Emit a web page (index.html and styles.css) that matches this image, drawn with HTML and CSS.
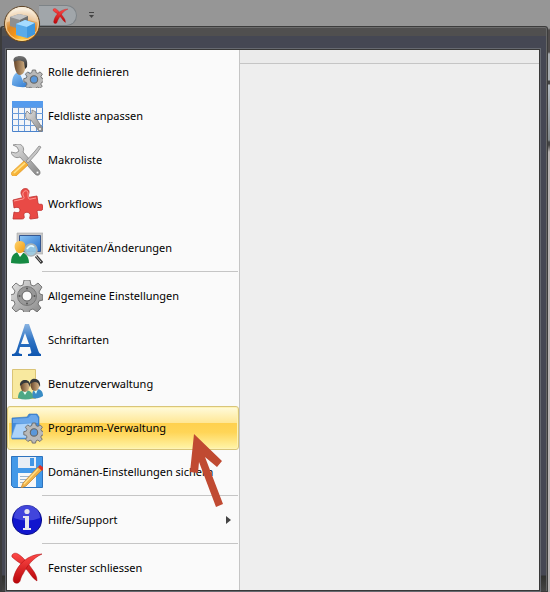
FILE: index.html
```html
<!DOCTYPE html>
<html lang="de">

<head>
  <meta charset="UTF-8" />
  <meta name="viewport" content="width=device-width, initial-scale=1.0" />
  <title>Programm-Menü</title>
  <link rel="stylesheet" href="styles.css">
</head>

<body>
  <!-- shared gradients and the small gear -->
  <svg class="defs" width="0" height="0" aria-hidden="true">
    <defs>
      <linearGradient id="blue" x1="0" y1="0" x2="1" y2="1">
        <stop offset="0" stop-color="#8cc4f4" /><stop offset="1" stop-color="#2470cc" />
      </linearGradient>
      <linearGradient id="letter" x1="0" y1="0" x2="0" y2="1">
        <stop offset="0" stop-color="#8ab4e2" /><stop offset=".5" stop-color="#2f74c4" /><stop offset="1" stop-color="#0f56b0" />
      </linearGradient>
      <linearGradient id="steel" x1="0" y1="0" x2="1" y2="1">
        <stop offset="0" stop-color="#e6e6e6" /><stop offset="1" stop-color="#858585" />
      </linearGradient>
      <linearGradient id="skin" x1="0" y1="0" x2="1" y2="0">
        <stop offset="0" stop-color="#684629" /><stop offset="1" stop-color="#dab98c" />
      </linearGradient>
      <linearGradient id="hair" x1="0" y1="0" x2="0" y2="1">
        <stop offset="0" stop-color="#777" /><stop offset="1" stop-color="#222" />
      </linearGradient>
      <linearGradient id="red" x1="0" y1="0" x2="0" y2="1">
        <stop offset="0" stop-color="#ff4a48" /><stop offset="1" stop-color="#b80509" />
      </linearGradient>
      <linearGradient id="gold" x1="0" y1="0" x2="1" y2="1">
        <stop offset="0" stop-color="#ffd36c" /><stop offset="1" stop-color="#f09a10" />
      </linearGradient>
      <g id="gear">
        <path d="M-1.6-9h3.2l.5 2.6 1.8.8 2.2-1.5 2.3 2.3-1.5 2.2.8 1.8 2.3.4v3.2l-2.4.5-.8 1.8 1.4 2.1-2.3 2.3-2.1-1.4-1.8.8-.5 2.2h-3.2l-.5-2.2-1.8-.8-2.1 1.4-2.3-2.3 1.4-2.1-.8-1.8-2.4-.5v-3.2l2.3-.4.8-1.8-1.5-2.2 2.3-2.3 2.2 1.5 1.8-.8z" fill="#b9b9b9" stroke="#6b6b6b" stroke-width=".9" />
        <circle r="3.7" cy=".4" fill="#5a97da" stroke="#686868" stroke-width="1.1" />
      </g>
      <g id="cross">
        <path d="M1 5C0 2 4 0 7 2c5 3 10 9 14 15 3 4 5 7 5 12-5-3-7-8-11-12C12 12 6 10 1 5z" fill="url(#red)" stroke="#a80508" stroke-width=".5" />
        <path d="M31 2C22 6 16 14 12 22c-3 4-2 8-5 9-4 1-6-2-4-7C6 13 17 2 31 2z" fill="url(#red)" stroke="#a80508" stroke-width=".5" />
      </g>
    </defs>
  </svg>

  <header class="titlebar">
    <button class="orb" aria-label="Menü">
      <svg viewBox="0 0 38 38">
        <defs>
          <radialGradient id="orb" cx=".5" cy=".95" r=".9">
            <stop offset="0" stop-color="#ffd24a" /><stop offset=".3" stop-color="#f39418" />
            <stop offset=".55" stop-color="#d9872a" /><stop offset="1" stop-color="#f8eedd" />
          </radialGradient>
        </defs>
        <circle cx="19" cy="19" r="17.6" fill="url(#orb)" stroke="#5e4325" />
        <circle cx="19" cy="19" r="16.3" fill="none" stroke="#f7dfb4" stroke-opacity=".8" />
        <path d="M4 17a15 15 0 0 1 30 0q-15-5-30 0z" fill="#fff" opacity=".35" />
        <path d="M7 12l9-3 9 2v9l-9 4-9-3z" fill="#8f8f8f" />
        <path d="M7 12l9-3 9 2-8 4z" fill="#c4c4c4" />
        <path d="M17 15l8-4v9l-8 4z" fill="#6e6e6e" />
        <path d="M13 19l9-4 10 3v11l-8 4-11-3z" fill="#5aabe9" />
        <path d="M13 19l9-4 10 3-8 4z" fill="#a5dbff" />
        <path d="M24 22l8-4v11l-8 4z" fill="#3f98e0" />
      </svg>
    </button>
    <button class="quick-close" aria-label="Schliessen">
      <svg viewBox="0 0 32 32"><use href="#cross" /></svg>
    </button>
    <button class="quick-more" aria-label="Mehr">
      <svg viewBox="0 0 7 8"><path d="M1 1.5h5" stroke="#444" /><path d="M1 4h5L3.5 7z" fill="#444" /></svg>
    </button>
  </header>

  <div class="window">
    <div class="panel">
      <nav class="menu">
        <button class="item">
          <svg viewBox="0 0 32 32">
            <path d="M1 29c0-8 2-12 7-13l5 3 4-3c5 1 6 7 6 13-6 3-16 3-22 0z" fill="url(#blue)" />
            <path d="M8 16l5 11 4-11z" fill="#e8f3ff" />
            <path d="M3 5c0-3 3-4 6-4 5 0 7 3 6 9-1 5-3 9-6 9-4 0-6-8-6-14z" fill="url(#skin)" />
            <path d="M3 6C1 2 5 0 9 0c6 0 8 4 7 11l-2 2-1-7C10 4 6 4 3 6z" fill="url(#hair)" />
            <use href="#gear" transform="translate(23 23)" />
          </svg>
          <span>Rolle definieren</span>
        </button>
        <button class="item">
          <svg viewBox="0 0 32 32">
            <path d="M1.5 1.5h30v30h-30z" fill="#f3f5f8" stroke="#4b83cc" />
            <path d="M1 1h31v6H1z" fill="#559bed" />
            <path d="M1 7.5h31M1 13.5h31M1 19.5h31M1 25.5h31M7.5 7v24M13.5 7v24M19.5 7v24M25.5 7v24" stroke="#6b9cda" />
            <path d="M16 11l3 3 2-1v-3l4 2v6l7 11c0 3-3 4-5 1l-7-10c-5 1-7-4-4-9z" fill="url(#steel)" stroke="#808080" stroke-width=".8" />
            <circle cx="29" cy="29" r="1" fill="#fff" />
          </svg>
          <span>Feldliste anpassen</span>
        </button>
        <button class="item">
          <svg viewBox="0 0 32 32">
            <path d="M2 1l5-1c4 0 7 4 5 8l16 18c3 4-1 7-4 4L9 13c-4 2-8-1-9-5l5 1 3-2-2-4z" fill="url(#steel)" stroke="#808080" stroke-width=".8" />
            <path d="M30 3L26 9l-9 10-2-2 9-10 4-5z" fill="#c6c6c6" stroke="#888" stroke-width=".8" />
            <path d="M13 17l4 4L5 32c-3 2-6-2-4-4z" fill="url(#gold)" stroke="#de8d11" stroke-width=".6" />
            <path d="M14 19L3 29" stroke="#ffe38a" stroke-width="1.5" />
            <circle cx="26.5" cy="28.5" r="1.2" fill="#fff" stroke="#888" stroke-width=".5" />
          </svg>
          <span>Makroliste</span>
        </button>
        <button class="item">
          <svg viewBox="0 0 32 32">
            <path d="M2 12l8-2c3 0 0-3 0-5 0-6 9-6 8 0-1 3-1 5 2 4l6-1 1 7c1 3 5-1 5 4 0 6-5 2-6 4l1 7-7 1c-3 0 0-3-1-5-2-3-7-2-6 2 1 3-1 3-4 3H2l1-7c3 1 6 1 6-2s-4-3-6-2z" fill="#e94a46" stroke="#bd302e" stroke-width=".8" />
            <path d="M3 13l9-2c3-1-1-3 0-6 1-3 5-3 5 0 0 4 0 7 3 6l5-1" fill="none" stroke="#ff9b95" />
          </svg>
          <span>Workflows</span>
        </button>
        <button class="item">
          <svg viewBox="0 0 32 32">
            <path d="M6 1h26v21H6z" fill="#c8c8c8" stroke="#aaa" stroke-width=".6" />
            <path d="M8.5 3.5h21v16h-21z" fill="url(#blue)" stroke="#36578f" />
            <path d="M0 31c0-8 3-10 8-11 6 0 10 4 10 11-6 1-12 1-18 0z" fill="#168a43" />
            <path d="M6 20l3 5 4-5z" fill="#fff" />
            <path d="M9 9c5 0 6 4 5 8-1 5-8 6-10 0-1-4 0-8 5-8z" fill="url(#gold)" />
            <path d="M25 24l6 7" stroke="#333" stroke-width="3" />
            <path d="M25 24l5 6" stroke="#ccc" />
            <circle cx="20" cy="18" r="6" fill="#9bcbe2" fill-opacity=".9" stroke="#a9b2b6" stroke-width="1.6" />
            <path d="M16 17q3-5 7-2" fill="none" stroke="#e2f8ff" stroke-width="1.5" />
          </svg>
          <span>Aktivitäten/Änderungen</span>
        </button>
        <hr>
        <button class="item">
          <svg viewBox="0 0 32 32">
            <path d="M13 0h6l1 5 3 1 4-3 4 4-3 5 1 2 3 1v5l-4 1-1 3 3 4-4 4-4-3-3 1-1 3h-5l-1-3-3-1-4 3-4-4 3-4-1-3-4-1v-5l4-1 1-3-3-4 4-4 4 3 3-1z" fill="url(#steel)" stroke="#606060" stroke-width=".8" />
            <circle cx="16" cy="16" r="9.5" fill="#989898" stroke="#777" />
            <circle cx="16" cy="16" r="5" fill="#fafafa" stroke="#606060" />
            <circle cx="16" cy="8.5" r="1" fill="#555" /><circle cx="16" cy="23.5" r="1" fill="#555" />
            <circle cx="8.5" cy="16" r="1" fill="#555" /><circle cx="23.5" cy="16" r="1" fill="#555" />
          </svg>
          <span>Allgemeine Einstellungen</span>
        </button>
        <button class="item">
          <svg viewBox="0 0 32 32">
            <path d="M14 0h4l9 26c1 3 2 4 3 4v2H17v-2c3 0 4-1 3-3l-1-4H9l-1 4c-1 2 0 3 3 3v2H1v-2c3 0 4-2 5-5zM14 9l-4 11h8z" fill="url(#letter)" fill-rule="evenodd" />
          </svg>
          <span>Schriftarten</span>
        </button>
        <button class="item">
          <svg viewBox="0 0 32 32">
            <path d="M1.5 1.5h23v29h-23z" fill="#f8e99f" stroke="#dac477" />
            <path d="M21 30c0-6 1-9 5-9s6 3 6 7c-3 2-7 3-11 2z" fill="#398cc5" />
            <path d="M7 30c0-6 3-8 7-8s8 2 8 8c-5 2-10 2-15 0z" fill="#4da886" />
            <path d="M11 22l3 5 3-5zM22 21l3 5 2-5z" fill="#e4fff4" />
            <ellipse cx="14" cy="18" rx="4.5" ry="6" fill="url(#skin)" />
            <ellipse cx="24" cy="17" rx="4.500" ry="6" fill="url(#skin)" />
            <path d="M9 18c-1-8 12-8 10 1l-2-4c-3-1-5 0-8 3zM19 16c-1-8 12-7 10 3l-2-4c-3-2-5-1-8 1z" fill="#35383a" />
          </svg>
          <span>Benutzerverwaltung</span>
        </button>
        <button class="item active">
          <svg viewBox="0 0 32 32">
            <path d="M1 6l15-1 2-3h8l2 3v20l-4 2H1z" fill="#438ad9" stroke="#3374be" stroke-width=".6" />
            <path d="M2 7l15-1 3-3h5l2 3v5H2z" fill="#6ba8ea" />
            <path d="M5 12l16-1-5 15H0z" fill="#acd3fa" stroke="#5c9de0" stroke-width=".6" />
            <use href="#gear" transform="translate(23 20)" />
          </svg>
          <span>Programm-Verwaltung</span>
        </button>
        <button class="item">
          <svg viewBox="0 0 32 32">
            <path d="M.5.5h31v31h-29l-2-2z" fill="#4499e8" stroke="#2e73bd" />
            <path d="M7 1h18v11H7z" fill="#e9eef5" /><path d="M19 2h4v8h-4z" fill="#4397e5" />
            <path d="M7 17h18v14H7z" fill="#f8f8f8" />
            <path d="M9 20.5h14M9 23.5h12M9 26.5h8" stroke="#9db5cd" />
            <path d="M27 11l4 3-16 16-5 2 2-5z" fill="#f1b348" stroke="#bc8030" stroke-width=".7" />
            <path d="M27 13L13 28" stroke="#ffe18f" stroke-width="1.3" />
            <path d="M27 11l2-2 4 3-2 3z" fill="#dc3024" />
          </svg>
          <span>Domänen-Einstellungen sichern</span>
        </button>
        <hr>
        <button class="item">
          <svg viewBox="0 0 32 32">
            <circle cx="16" cy="16" r="14.6" fill="#1116ce" stroke="#090e88" />
            <path d="M3 14a13 13 0 0 1 26 0q-13 5-26 0z" fill="#6a6ee8" opacity=".55" />
            <circle cx="16" cy="7.5" r="2.6" fill="#e6e6ee" />
            <path d="M12 12h6v12h2v2h-8v-2h2V14h-2z" fill="#e6e6ee" />
          </svg>
          <span>Hilfe/Support</span>
          <svg class="arrow" viewBox="0 0 5 8"><path d="M0 0l5 4-5 4z" fill="#444" /></svg>
        </button>
        <hr>
        <button class="item">
          <svg viewBox="0 0 32 32"><use href="#cross" /></svg>
          <span>Fenster schliessen</span>
        </button>
        <svg class="pointer" viewBox="0 0 36 74">
          <path d="M6 1l28 27-5 6-12-10 18 47-7 3L11 29l-1 11-8-1z" fill="#c04a32" />
        </svg>
      </nav>
      <section class="details">
        <div class="details-head"></div>
      </section>
    </div>
  </div>
</body>

</html>
```

FILE: styles.css
```css
* {
  box-sizing: border-box;
}

body {
  margin: 0;
  min-height: 100vh;
  display: flex;
  flex-direction: column;
  font-family: "Noto Sans", "Open Sans", sans-serif;
  font-size: 11px;
  background: linear-gradient(#969696 28px, #4f4b4b 30px, #4f4b4b 52px, #a9adb2 54px, #a9adb2 80px, #444 81px, #444 84px, #b4bbc2 85px, #858b8e 140px, #444 142px, #444 145px, #bbb5b5 152px);
}

button {
  font: inherit;
  color: #000;
  border: none;
  background: transparent;
  padding: 0;
}

svg {
  display: block;
}

.defs {
  position: absolute;
}

.titlebar {
  height: 26px;
  display: flex;
  align-items: flex-start;
  padding: 5px 3px 0;
}

/* the round button hangs over the window frame */
.orb {
  position: relative;
  z-index: 2;
  width: 38px;
  height: 38px;
}

.quick-close {
  width: 38px;
  height: 21px;
  margin-left: -2px;
  padding-left: 13px;
  border: 1px solid #7d8387;
  border-left: none;
  border-radius: 0 11px 11px 0;
  background: #a1a6aa;
}

.quick-close svg {
  width: 17px;
  height: 16px;
}

.quick-more {
  margin: 6px 0 0 11px;
}

.quick-more svg {
  width: 7px;
  height: 8px;
}

.window {
  flex: 1;
  display: flex;
  margin-right: 2px;
  padding: 22px 7px 0 4px;
  border: 1px solid #3c3c3c;
  border-width: 1px 1px 1px 2px;
  border-radius: 3px 3px 0 0;
  box-shadow: inset 0 1px #6b6b6b, inset -1px 0 #666;
  background: linear-gradient(#504f4f 9px, #454753 9px, #454753 calc(100% - 16px), #30312f calc(100% - 15px), #444);
}

.panel {
  flex: 1;
  display: flex;
  border: 1px solid #383838;
  outline: 1px solid #666970;
}

.menu {
  position: relative;
  width: 233px;
  border-right: 1px solid #c5c5c5;
  background: #fafafa;
}

.item {
  display: flex;
  align-items: center;
  gap: 5px;
  width: 100%;
  height: 44px;
  padding: 0 7px 0 3px;
  border: 1px solid transparent;
  border-radius: 3px;
  text-align: left;
  white-space: nowrap;
}

.item span {
  padding-bottom: 2px;
}

.item svg {
  width: 32px;
  height: 32px;
}

.item .arrow {
  width: 5px;
  height: 8px;
  margin-left: auto;
}

.active {
  border-color: #d8c57a;
  box-shadow: inset 0 0 0 1px #fff3b5;
  background: linear-gradient(#fffbdc, #ffe795 38%, #ffd14f 39%, #ffd557 60%, #fff5aa);
}

hr {
  height: 4px;
  margin: 0 1px 0 35px;
  border: none;
  background: linear-gradient(transparent 1px, #c5c5c5 1px, #c5c5c5 2px, transparent 2px);
}

.pointer {
  position: absolute;
  left: 181px;
  top: 383px;
  width: 36px;
  height: 74px;
}

.details {
  flex: 1;
  background: #eee;
}

.details-head {
  height: 14px;
  border-bottom: 1px solid #c5c5c5;
  background: #ebebeb;
}
```
